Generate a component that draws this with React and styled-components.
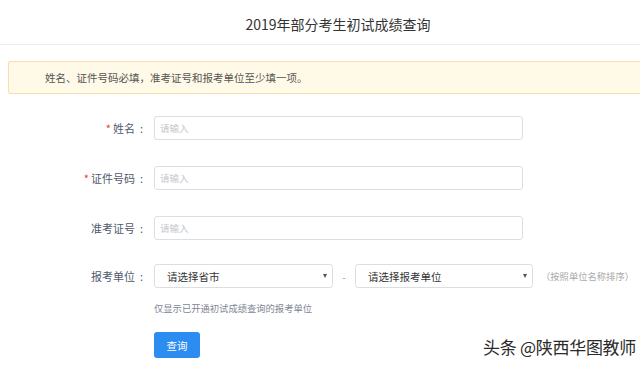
import React from "react";
import styled, { createGlobalStyle } from "styled-components";

const GlobalStyle = createGlobalStyle`
  body {
    margin: 0;
    background: #fff;
    font-family: "Noto Sans CJK SC", "Noto Sans", sans-serif;
  }
`;

const Page = styled.div`
  position: relative;
  width: 640px;
  height: 365px;
  overflow: hidden;
  background: #fff;
`;

const Header = styled.div`
  height: 45px;
  box-sizing: border-box;
  border-bottom: 1px solid #ebebeb;
  display: flex;
  align-items: center;
  justify-content: center;
  padding: 4px 0 0 36px;
  font-size: 14px;
  color: #333;
`;

const Alert = styled.div`
  margin: 16px 0 0 8px;
  height: 33px;
  box-sizing: border-box;
  border: 1px solid #f7dfae;
  border-right: none;
  border-radius: 3px 0 0 3px;
  background: #fff9e8;
  display: flex;
  align-items: center;
  padding-left: 36px;
  font-size: 10.5px;
  color: #555;
`;

const Form = styled.div`
  margin-top: 22px;
  display: flex;
  flex-direction: column;
`;

const Row = styled.div`
  display: grid;
  grid-template-columns: 144px auto;
  column-gap: 10px;
  align-items: center;
  min-height: ${p => p.h ?? 24}px;
  margin-bottom: ${p => p.gap ?? 26}px;
`;

const Label = styled.label`
  text-align: right;
  font-size: 11px;
  color: #515a6e;
  white-space: nowrap;
`;

const Star = styled.span`
  color: #ed4014;
  margin-right: 2px;
`;

const Colon = styled.span`
  margin-left: 5px;
  margin-right: 1px;
`;

const Input = styled.input`
  width: 369px;
  height: 24px;
  box-sizing: border-box;
  border: 1px solid #dcdee2;
  border-radius: 3px;
  padding: 0 5px;
  font-family: inherit;
  font-size: 9.5px;
  outline: none;
  &::placeholder {
    color: #c5c8ce;
  }
`;

const Line = styled.div`
  display: flex;
  align-items: center;
`;

const Select = styled.div`
  width: ${p => p.w}px;
  height: 24px;
  box-sizing: border-box;
  border: 1px solid #dcdee2;
  border-radius: 3px;
  display: flex;
  align-items: center;
  justify-content: space-between;
  padding: 0 5px 0 12px;
  font-size: 10.5px;
  color: #333;
`;

const Caret = styled.span`
  width: 0;
  height: 0;
  border-left: 2.5px solid transparent;
  border-right: 2.5px solid transparent;
  border-top: 4px solid #555;
`;

const Dash = styled.span`
  width: 22px;
  text-align: center;
  font-size: 10px;
  color: #999;
`;

const Note = styled.span`
  margin-left: 8px;
  font-size: 9.3px;
  color: #aaa;
  white-space: nowrap;
`;

const Hint = styled.div`
  font-size: 9.3px;
  line-height: 14px;
  color: #808695;
`;

const Button = styled.button`
  display: block;
  width: 46px;
  height: 26px;
  border: none;
  border-radius: 3px;
  background: #2d8cf0;
  color: #fff;
  font-family: inherit;
  font-size: 10.5px;
  padding: 0;
`;

const Watermark = styled.div`
  position: absolute;
  right: 4px;
  bottom: 6px;
  font-size: 17px;
  color: #2a2a2a;
  text-shadow: 0 0 2px #fff, 1px 1px 1px #fff;
  letter-spacing: -0.3px;
`;

const fields = [
  { label: "姓名", required: true },
  { label: "证件号码", required: true },
  { label: "准考证号", required: false },
];

export default function App() {
  return (
    <Page>
      <GlobalStyle />
      <Header>2019年部分考生初试成绩查询</Header>
      <Alert>姓名、证件号码必填，准考证号和报考单位至少填一项。</Alert>
      <Form>
        {fields.map((f, i) => (
          <Row key={f.label} gap={i === 2 ? 24 : 26}>
            <Label>
              {f.required && <Star>*</Star>}
              {f.label}
              <Colon>:</Colon>
            </Label>
            <Input placeholder="请输入" />
          </Row>
        ))}
        <Row gap={13}>
          <Label>
            报考单位<Colon>:</Colon>
          </Label>
          <Line>
            <Select w={179}>
              请选择省市
              <Caret />
            </Select>
            <Dash>-</Dash>
            <Select w={178}>
              请选择报考单位
              <Caret />
            </Select>
            <Note>（按照单位名称排序）</Note>
          </Line>
        </Row>
        <Row h={14} gap={17}>
          <span />
          <Hint>仅显示已开通初试成绩查询的报考单位</Hint>
        </Row>
        <Row h={26}>
          <span />
          <div>
            <Button>查询</Button>
          </div>
        </Row>
      </Form>
      <Watermark>头条 @陕西华图教师</Watermark>
    </Page>
  );
}
